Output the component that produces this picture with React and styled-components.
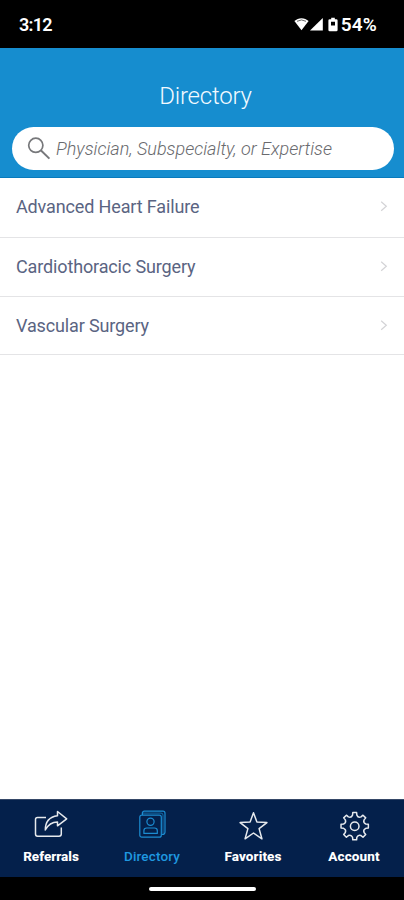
import { useState } from "react";
import styled, { createGlobalStyle } from "styled-components";

const specialties = [
  { id: 1, name: "Advanced Heart Failure" },
  { id: 2, name: "Cardiothoracic Surgery" },
  { id: 3, name: "Vascular Surgery" },
];

const tabs = [
  { name: "Referrals", icon: ReferralsIcon, spacing: "0px" },
  { name: "Directory", icon: DirectoryIcon, spacing: "0.15px" },
  { name: "Favorites", icon: FavoritesIcon, spacing: "0.1px" },
  { name: "Account", icon: AccountIcon, spacing: "0.1px" },
];

export default function App() {
  const [activeTab, setActiveTab] = useState("Directory");
  const [search, setSearch] = useState("");

  return (
    <>
      <GlobalStyle />
      <Screen>
        <StatusBar>
          <StatusText $spacing="-0.7px">3:12</StatusText>
          <StatusIcons>
            <PhoneStatus />
            <StatusText $large $spacing="0.2px">
              54%
            </StatusText>
          </StatusIcons>
        </StatusBar>
        <Header>
          <Title>Directory</Title>
          <SearchBox>
            <SearchIcon />
            <SearchInput
              placeholder="Physician, Subspecialty, or Expertise"
              value={search}
              onChange={(e) => setSearch(e.target.value)}
            />
          </SearchBox>
        </Header>
        <List>
          {specialties.map((item) => (
            <Row key={item.id}>
              <RowName>{item.name}</RowName>
              <Chevron />
            </Row>
          ))}
        </List>
        <TabBar>
          {tabs.map((tab) => (
            <Tab
              key={tab.name}
              $active={tab.name === activeTab}
              onClick={() => setActiveTab(tab.name)}
            >
              <tab.icon />
              <TabName $active={tab.name === activeTab} $spacing={tab.spacing}>
                {tab.name}
              </TabName>
            </Tab>
          ))}
        </TabBar>
        <GestureBar>
          <Handle />
        </GestureBar>
      </Screen>
    </>
  );
}

function PhoneStatus() {
  return (
    <svg width="44" height="16" viewBox="0 0 44 16" fill="#fff">
      <path d="M0.4 4.1C4.2 0.2 10.8 0.2 14.6 4.1L7.5 13.3Z" />
      <path d="M3 4.3Q7.5 1.6 12 4.3" fill="none" stroke="#000" strokeWidth="0.6" />
      <path d="M28.8 1V13.6H16Z" />
      <path
        fillRule="evenodd"
        d="M37.2 0.7h3.6v1.5h1.5q1.3 0 1.3 1.2v9.5q0 1.4-1.4 1.4h-6.4q-1.4 0-1.4-1.4V3.4q0-1.2 1.3-1.2h1.5zM37 4.7v3.8h4V4.7z"
      />
    </svg>
  );
}

function SearchIcon() {
  return (
    <svg width="24" height="24" viewBox="0 0 24 24" fill="none" stroke="#77787b" strokeWidth="1.7">
      <circle cx="8.8" cy="8.3" r="7.1" />
      <path d="M13.8 13.3L22.4 21.6" strokeWidth="2" />
    </svg>
  );
}

function Chevron() {
  return (
    <svg width="8" height="12" viewBox="0 0 8 12" fill="none" stroke="#d3d3d6" strokeWidth="1.2">
      <path d="M1.2 0.7L6.3 5.2L1.2 9.7" />
    </svg>
  );
}

function ReferralsIcon() {
  return (
    <TabIcon viewBox="0 0 36 32">
      <path d="M13 7.5H4.5Q2.5 7.5 2.5 9.5V24Q2.5 26.2 4.5 26.2H26Q28.3 26.2 28.3 24V17.5" />
      <path d="M24.5 1.5L33.7 8.8L24.5 15.8V12Q16.5 12 12.3 20Q12.3 7.3 24.5 5.7Z" />
    </TabIcon>
  );
}

function DirectoryIcon() {
  return (
    <TabIcon viewBox="0 0 36 32" $thin>
      <rect x="5.8" y="5.2" width="21.5" height="22" rx="2" />
      <path d="M8.5 5V3Q8.5 1.2 10.3 1.2H29Q31 1.2 31 3.2V22Q31 24.5 28.5 24.5H27.5" />
      <path d="M7.5 3.1H27Q29 3.1 29 5.1V24.5" strokeWidth="0.7" />
      <circle cx="16.5" cy="11.7" r="3.6" />
      <path d="M9.9 23.4V20.7Q9.9 18 12.7 18H20.5Q23.3 18 23.3 20.7V23.4Z" />
    </TabIcon>
  );
}

function FavoritesIcon() {
  return (
    <TabIcon viewBox="0 0 36 32">
      <path d="M18.5 2.7L21.9 12.1L31.9 12.6L24.1 18.6L26.9 28.8L18.5 23L10.1 28.8L12.9 18.6L5.1 12.6L15.1 12.1Z" />
    </TabIcon>
  );
}

function gearPoint(radius, degrees) {
  const angle = (degrees * Math.PI) / 180;
  const x = 18.7 + radius * Math.cos(angle);
  const y = 16.2 + radius * Math.sin(angle);
  return `${x.toFixed(2)} ${y.toFixed(2)}`;
}

// eight teeth with a rounded notch after each one
const gearPath =
  [0, 45, 90, 135, 180, 225, 270, 315]
    .map(
      (a, i) =>
        `${i === 0 ? "M" : "L"}${gearPoint(13.8, a - 8)}L${gearPoint(13.8, a + 8)}` +
        `L${gearPoint(11.3, a + 11)}Q${gearPoint(8.9, a + 22.5)} ${gearPoint(11.3, a + 34)}`
    )
    .join("") + "Z";

function AccountIcon() {
  return (
    <TabIcon viewBox="0 0 36 32">
      <path d={gearPath} />
      <circle cx="18.7" cy="16.2" r="4.3" />
    </TabIcon>
  );
}

const GlobalStyle = createGlobalStyle`
  * {
    box-sizing: border-box;
    margin: 0;
    padding: 0;
  }

  body {
    font-family: Roboto, sans-serif;
    background: #fff;
  }

  svg {
    display: block;
    flex-shrink: 0;
  }
`;

const Screen = styled.div`
  height: 100vh;
  display: flex;
  flex-direction: column;
`;

const StatusBar = styled.div`
  height: 48px;
  display: flex;
  align-items: center;
  justify-content: space-between;
  padding: 1px 27px 0 19px;
  background: #000;
`;

const StatusIcons = styled.div`
  display: flex;
  align-items: center;
  gap: 3px;
`;

const StatusText = styled.span`
  color: #fff;
  font-size: ${(props) => (props.$large ? "19px" : "18px")};
  font-weight: 600;
  line-height: 20px;
  letter-spacing: ${(props) => props.$spacing};
`;

const Header = styled.header`
  height: 130px;
  display: flex;
  flex-direction: column;
  align-items: center;
  padding: 32px 10px 0 12px;
  background: #168dcf;
  border-bottom: 1px solid #087abc;
`;

const Title = styled.h1`
  height: 47px;
  padding-left: 5px;
  color: #f2faff;
  font-size: 24px;
  font-weight: 300;
  line-height: 32px;
  letter-spacing: -0.2px;
`;

const SearchBox = styled.label`
  width: 100%;
  height: 43px;
  display: flex;
  align-items: center;
  gap: 5px;
  padding-left: 15px;
  border-radius: 22px;
  background: #fff;
`;

const SearchInput = styled.input`
  flex: 1;
  height: 30px;
  border: none;
  outline: none;
  background: transparent;
  color: #35446b;
  font-family: inherit;
  font-size: 18px;

  &::placeholder {
    color: #696a6e;
    font-style: italic;
    font-weight: 300;
    opacity: 1;
  }
`;

const List = styled.ul`
  flex: 1;
  list-style: none;
`;

const Row = styled.li`
  height: 59px;
  display: flex;
  align-items: center;
  justify-content: space-between;
  padding: 0 16px 1px 16px;
  border-bottom: 1px solid #e4e4e6;

  &:first-child {
    height: 60px;
    padding-bottom: 2px;
  }

  &:last-child {
    height: 58px;
    padding-bottom: 0;
  }
`;

const RowName = styled.span`
  color: #5a6482;
  font-size: 18px;
  font-weight: 400;
  letter-spacing: -0.14px;
`;

const TabBar = styled.nav`
  height: 78px;
  display: grid;
  grid-template-columns: repeat(4, 1fr);
  border-top: 1px solid #354767;
  background: #04204b;
`;

const Tab = styled.button`
  display: flex;
  flex-direction: column;
  align-items: center;
  padding: 10px 0 0 1px;
  border: none;
  background: transparent;
  color: ${(props) => (props.$active ? "#1f98e0" : "#fff")};
  font-family: inherit;
  cursor: pointer;
`;

const TabIcon = styled.svg`
  width: 36px;
  height: 32px;
  fill: none;
  stroke: currentColor;
  stroke-width: ${(props) => (props.$thin ? 1.2 : 1.5)};
  stroke-linejoin: round;
  opacity: 0.9;
`;

const TabName = styled.span`
  margin-top: 6px;
  font-size: 13.5px;
  font-weight: ${(props) => (props.$active ? 500 : 800)};
  line-height: 16px;
  letter-spacing: ${(props) => props.$spacing};
`;

const GestureBar = styled.div`
  height: 23px;
  display: flex;
  justify-content: center;
  padding: 10px 0 0 1px;
  background: #000;
`;

const Handle = styled.div`
  width: 107px;
  height: 4px;
  border-radius: 2px;
  background: #fff;
`;
